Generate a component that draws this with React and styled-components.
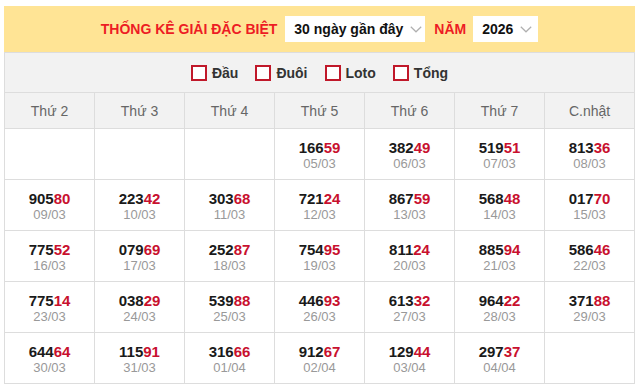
import React from 'react'
import styled, { createGlobalStyle } from 'styled-components'

const GlobalStyle = createGlobalStyle`
  body {
    margin: 0;
    background: #fff;
    font-family: "Liberation Sans", Arial, sans-serif;
  }
`

const Wrapper = styled.div`
  padding: 6px 0 0 4px;
`

const Box = styled.div`
  width: 631px;
  box-sizing: border-box;
  border-left: 1px solid #ddd;
  border-right: 1px solid #ddd;
`

const Header = styled.div`
  height: 46px;
  background: #ffe495;
  display: flex;
  align-items: center;
  justify-content: center;
  margin: 0 -1px;
`

const Title = styled.span`
  color: #ed1c24;
  font-size: 14px;
  font-weight: bold;
  margin: 0 ${(p) => (p.small ? 7 : 8)}px 0 ${(p) => (p.small ? 9 : 0)}px;
  white-space: nowrap;
`

const Select = styled.div`
  height: 26px;
  width: ${(p) => p.width}px;
  box-sizing: border-box;
  background: #fff;
  display: flex;
  align-items: center;
  gap: 7px;
  padding: 0 0 0 9px;
  font-size: 14px;
  font-weight: bold;
  color: #111;
  white-space: nowrap;
`

const Chevron = () => (
  <svg width="12" height="7" viewBox="0 0 12 7">
    <polyline points="0.8,0.8 6,5.8 11.2,0.8" fill="none" stroke="#b0b0b0" strokeWidth="1.2" />
  </svg>
)

const Filters = styled.div`
  height: 39px;
  background: #f2f2f2;
  border-top: 1px solid #ddd;
  border-bottom: 1px solid #ddd;
  display: flex;
  align-items: center;
  justify-content: center;
  gap: 17px;
`

const Check = styled.label`
  display: flex;
  align-items: center;
  gap: 5px;
  font-size: 14px;
  font-weight: bold;
  color: #333;
`

const CheckBox = styled.span`
  width: 16px;
  height: 16px;
  box-sizing: border-box;
  border: 2px solid #c0182a;
  background: #fff;
`

const Grid = styled.div`
  display: grid;
  grid-template-columns: repeat(6, 90px) 89px;
`

const DayCell = styled.div`
  height: 35px;
  background: #f2f2f2;
  border-right: ${(p) => (p.last ? 'none' : '1px solid #ddd')};
  border-bottom: 1px solid #ddd;
  display: flex;
  align-items: center;
  justify-content: center;
  font-size: 14px;
  color: #666;
`

const Cell = styled.div`
  height: 51px;
  box-sizing: border-box;
  border-right: ${(p) => (p.last ? 'none' : '1px solid #ddd')};
  border-bottom: 1px solid #ddd;
  display: flex;
  flex-direction: column;
  align-items: center;
  justify-content: center;
  padding-top: 1px;
`

const Number = styled.div`
  font-size: 15px;
  font-weight: bold;
  color: #1a1a1a;
  line-height: 17px;

  > span {
    color: #c8102e;
  }
`

const DateText = styled.div`
  font-size: 13px;
  color: #999;
  line-height: 15px;
`

const days = ['Thứ 2', 'Thứ 3', 'Thứ 4', 'Thứ 5', 'Thứ 6', 'Thứ 7', 'C.nhật']

const results = [
  null, null, null,
  ['16659', '05/03'], ['38249', '06/03'], ['51951', '07/03'], ['81336', '08/03'],
  ['90580', '09/03'], ['22342', '10/03'], ['30368', '11/03'], ['72124', '12/03'],
  ['86759', '13/03'], ['56848', '14/03'], ['01770', '15/03'],
  ['77552', '16/03'], ['07969', '17/03'], ['25287', '18/03'], ['75495', '19/03'],
  ['81124', '20/03'], ['88594', '21/03'], ['58646', '22/03'],
  ['77514', '23/03'], ['03829', '24/03'], ['53988', '25/03'], ['44693', '26/03'],
  ['61332', '27/03'], ['96422', '28/03'], ['37188', '29/03'],
  ['64464', '30/03'], ['11591', '31/03'], ['31666', '01/04'], ['91267', '02/04'],
  ['12944', '03/04'], ['29737', '04/04'], null,
]

const filters = ['Đầu', 'Đuôi', 'Loto', 'Tổng']

const App = () => {
  return (
    <Wrapper>
      <GlobalStyle />
      <Box>
        <Header>
          <Title>THỐNG KÊ GIẢI ĐẶC BIỆT</Title>
          <Select width={140}>
            30 ngày gần đây
            <Chevron />
          </Select>
          <Title small>NĂM</Title>
          <Select width={65}>
            2026
            <Chevron />
          </Select>
        </Header>
        <Filters>
          {filters.map((f) => (
            <Check key={f}>
              <CheckBox />
              {f}
            </Check>
          ))}
        </Filters>
        <Grid>
          {days.map((d, i) => (
            <DayCell key={d} last={i === 6}>
              {d}
            </DayCell>
          ))}
          {results.map((r, i) => (
            <Cell key={i} last={i % 7 === 6}>
              {r && (
                <>
                  <Number>
                    {r[0].slice(0, 3)}
                    <span>{r[0].slice(3)}</span>
                  </Number>
                  <DateText>{r[1]}</DateText>
                </>
              )}
            </Cell>
          ))}
        </Grid>
      </Box>
    </Wrapper>
  )
}

export default App
